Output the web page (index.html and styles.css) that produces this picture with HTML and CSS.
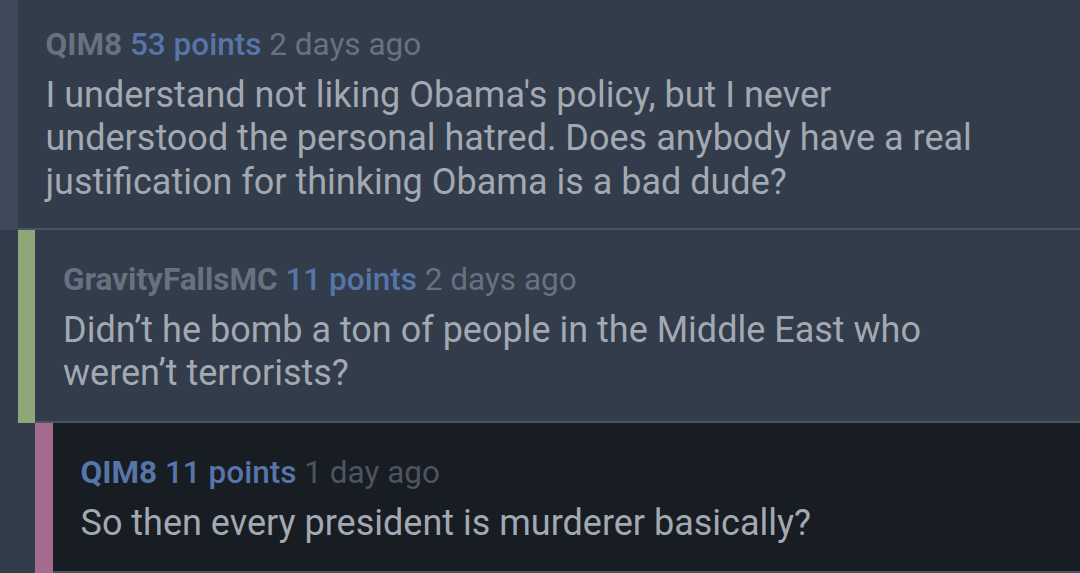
FILE: index.html
```html
<!DOCTYPE html>
<html>
<head>
<meta charset="utf-8">
<link rel="stylesheet" href="styles.css">
</head>
<body>
<div class="thread">
  <div class="comment depth-0">
    <div class="stripe stripe-root"></div>
    <div class="content">
      <div class="meta"><span class="author">QIM8</span> <span class="score">53 points</span> <span class="time">2 days ago</span></div>
      <div class="body">I understand not liking Obama's policy, but I never understood the personal hatred. Does anybody have a real justification for thinking Obama is a bad dude?</div>
    </div>
  </div>
  <div class="comment depth-1">
    <div class="stripe stripe-green"></div>
    <div class="content">
      <div class="meta"><span class="author">GravityFallsMC</span> <span class="score">11 points</span> <span class="time">2 days ago</span></div>
      <div class="body">Didn’t he bomb a ton of people in the Middle East who weren’t terrorists?</div>
    </div>
  </div>
  <div class="comment depth-2 selected">
    <div class="stripe stripe-pink"></div>
    <div class="content">
      <div class="meta"><span class="author op">QIM8</span> <span class="score">11 points</span> <span class="time">1 day ago</span></div>
      <div class="body">So then every president is murderer basically?</div>
    </div>
  </div>
</div>
</body>
</html>
```
FILE: styles.css
```css
html, body {
  margin: 0;
  padding: 0;
  background: #323c4a;
  height: 100%;
  overflow: hidden;
}
body {
  font-family: Roboto, "Liberation Sans", sans-serif;
}
.thread {
  display: flex;
  flex-direction: column;
}
.comment {
  display: flex;
  align-items: stretch;
}
.depth-1 { margin-left: 17.5px; }
.depth-2 { margin-left: 35px; }
.stripe {
  width: 17.5px;
  flex: none;
}
.stripe-root { background: #3e4a5b; }
.stripe-green { background: #8ea779; }
.stripe-pink { background: #a56b8f; }
.content {
  flex: 1;
  padding: 26px 82px 24px 28px;
  border-bottom: 2px solid #4a5463;
  background: #323c4a;
}
.depth-1 .content { padding-top: 31px; padding-bottom: 25.5px; }
.selected .content { background: #181c23; padding-top: 31px; padding-bottom: 26px; }
.meta {
  font-size: 31.5px;
  line-height: 38px;
  color: #687180;
  margin-bottom: 9.5px;
  white-space: nowrap;
}
.author { font-weight: 700; }
.author.op { color: #5675a8; }
.score { color: #5675a8; font-weight: 500; }
.time { color: #687180; }
.selected .time { color: #4d5461; }
.body {
  font-size: 36px;
  line-height: 43.5px;
  color: #a3a9b2;
}
```
